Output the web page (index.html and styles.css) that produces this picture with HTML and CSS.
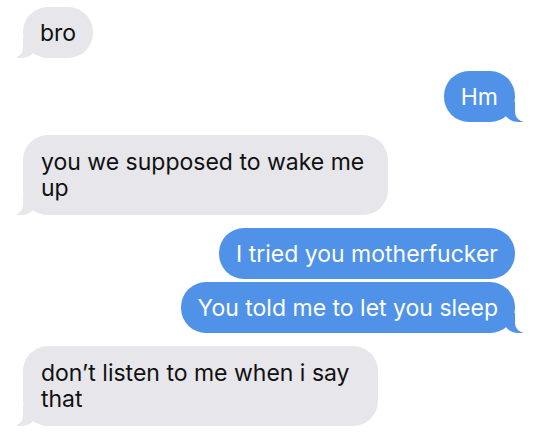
FILE: index.html
```html
<!DOCTYPE html>
<html>
<head>
<meta charset="utf-8">
<link rel="stylesheet" href="styles.css">
</head>
<body>
<div class="chat">
  <div class="bubble them tail">bro</div>
  <div class="bubble me tail">Hm</div>
  <div class="bubble them tail wide1">you we supposed to wake me up</div>
  <div class="bubble me">I tried you motherfucker</div>
  <div class="bubble me tail tight">You told me to let you sleep</div>
  <div class="bubble them tail wide2">don’t listen to me when i say that</div>
</div>
</body>
</html>
```
FILE: styles.css
```css
html, body {
  margin: 0;
  padding: 0;
  background: #ffffff;
}
.chat {
  display: flex;
  flex-direction: column;
  padding: 7px 25px 0 23px;
  gap: 13px;
  font-family: Inter, "Liberation Sans", Arial, sans-serif;
  font-size: 23px;
  line-height: 26px;
}
.bubble {
  position: relative;
  padding: 12.5px 17px;
  border-radius: 25px;
}
.them {
  align-self: flex-start;
  background: #e6e6eb;
  color: #111111;
}
.me {
  align-self: flex-end;
  background: #4f92e8;
  color: #ffffff;
}
.tight {
  margin-top: -10px;
}
.wide1, .wide2 {
  padding: 14px 12px 14px 18px;
}
.wide1 { width: 335px; }
.wide2 { width: 325px; }
.tail::before,
.tail::after {
  content: "";
  position: absolute;
  bottom: 0;
  height: 20px;
}
.them.tail::before {
  left: -6px;
  width: 20px;
  background: #e6e6eb;
  border-bottom-right-radius: 16px 14px;
}
.them.tail::after {
  left: -10px;
  width: 10px;
  background: #ffffff;
  border-bottom-right-radius: 10px;
}
.me.tail::before {
  right: -8px;
  width: 20px;
  background: #4f92e8;
  border-bottom-left-radius: 16px 14px;
}
.me.tail::after {
  right: -10px;
  width: 10px;
  background: #ffffff;
  border-bottom-left-radius: 10px;
}
```
